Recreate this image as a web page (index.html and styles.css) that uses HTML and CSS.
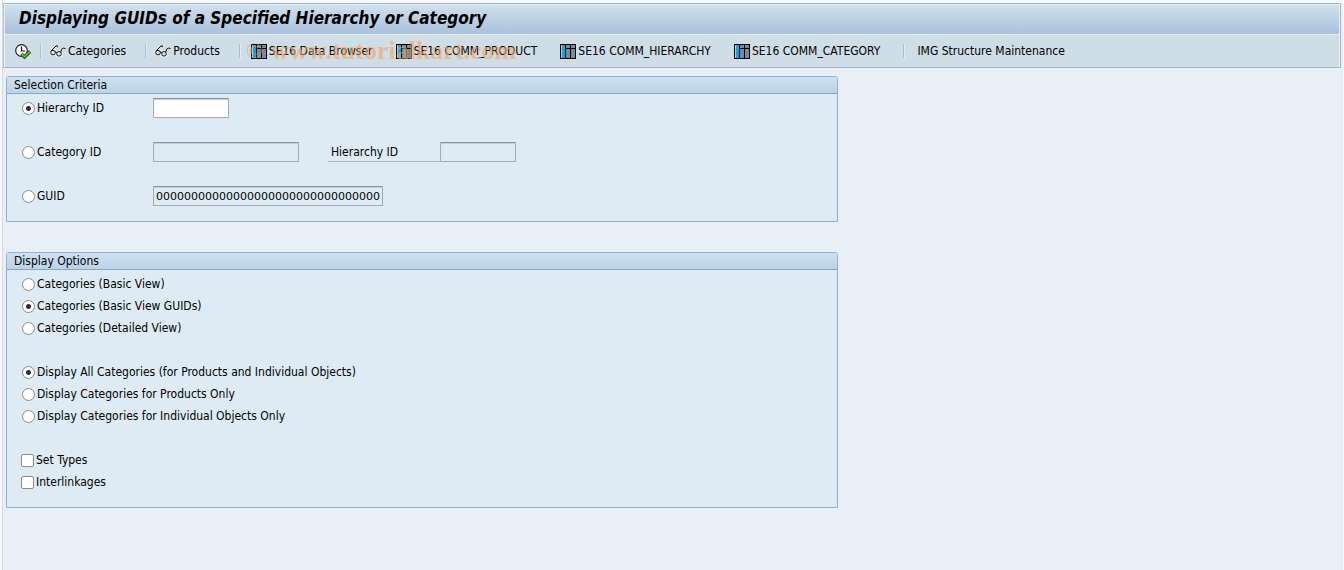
FILE: index.html
```html
<!DOCTYPE html>
<html lang="en">
<head>
    <meta charset="UTF-8">
    <meta name="viewport" content="width=device-width, initial-scale=1.0">
    <title>Displaying GUIDs of a Specified Hierarchy or Category</title>
    <link rel="stylesheet" href="styles.css">
</head>
<body>
    <!-- Shared toolbar icons -->
    <svg class="icon-defs" width="0" height="0" aria-hidden="true">
        <symbol id="icon-glasses" viewBox="0 0 16 14">
            <g fill="none" stroke="#fff" stroke-width="2.6" opacity="0.6">
                <circle cx="3.4" cy="8.4" r="2.3"/>
                <circle cx="9.2" cy="9.8" r="2.3"/>
            </g>
            <g fill="none" stroke="#111" stroke-width="1">
                <circle cx="3" cy="8.6" r="2.3"/>
                <circle cx="9" cy="9.8" r="2.3"/>
                <path d="M5.2 8.2 Q6.2 7.4 6.9 8.8"/>
                <path d="M1 7 L6 2 Q7.5 0.8 7.5 3.2"/>
                <path d="M10.8 8.2 L11.6 5.2 Q13 3.4 15.5 4.5"/>
            </g>
        </symbol>
        <symbol id="icon-table" viewBox="0 0 16 15">
            <rect x="0" y="0" width="16" height="15" fill="#000"/>
            <rect x="1" y="1" width="4" height="3" fill="#4a93b8"/>
            <rect x="1" y="4" width="4" height="10" fill="#0aa5ee"/>
            <rect x="1" y="4" width="1" height="10" fill="#7cdcff"/>
            <rect x="1" y="1" width="1" height="3" fill="#9fd4e8"/>
            <rect x="6" y="1" width="4" height="3" fill="#748c9c"/>
            <rect x="11" y="1" width="4" height="3" fill="#748c9c"/>
            <rect x="6" y="5" width="4" height="9" fill="#748c9c"/>
            <rect x="11" y="5" width="4" height="9" fill="#748c9c"/>
        </symbol>
    </svg>

    <div class="window">
        <header class="app-header">
            <h1 class="app-title">Displaying GUIDs of a Specified Hierarchy or Category</h1>
            <div class="toolbar">
                <button type="button" class="tool-btn" aria-label="Execute">
                    <svg class="icon" width="16" height="15" viewBox="0 0 16 15">
                        <circle cx="6.5" cy="6.5" r="5.8" fill="#fff" stroke="#222" stroke-width="1.2"/>
                        <path d="M6.5 2.5 V7 H10" fill="none" stroke="#111" stroke-width="1.2"/>
                        <path d="M6.5 10 L9.5 13 L15 7.5" fill="none" stroke="#1d4a12" stroke-width="3.4"/>
                        <path d="M6.8 10.2 L9.5 12.8 L14.8 7.6" fill="none" stroke="#5cc02e" stroke-width="1.8"/>
                    </svg>
                </button>
                <span class="separator"></span>
                <button type="button" class="tool-btn"><svg class="icon" width="16" height="14"><use href="#icon-glasses"/></svg>Categories</button>
                <span class="separator"></span>
                <button type="button" class="tool-btn"><svg class="icon" width="16" height="14"><use href="#icon-glasses"/></svg>Products</button>
                <span class="separator"></span>
                <div class="tool-group">
                    <button type="button" class="tool-btn"><svg class="icon" width="16" height="15"><use href="#icon-table"/></svg>SE16 Data Browser</button>
                    <button type="button" class="tool-btn"><svg class="icon" width="16" height="15"><use href="#icon-table"/></svg>SE16 COMM_PRODUCT</button>
                    <button type="button" class="tool-btn"><svg class="icon" width="16" height="15"><use href="#icon-table"/></svg>SE16 COMM_HIERARCHY</button>
                    <button type="button" class="tool-btn"><svg class="icon" width="16" height="15"><use href="#icon-table"/></svg>SE16 COMM_CATEGORY</button>
                </div>
                <span class="separator"></span>
                <button type="button" class="tool-btn text-only">IMG Structure Maintenance</button>
                <div class="watermark"><span class="mark">©</span>www.tutorialkart.com</div>
            </div>
        </header>

        <form class="content">
            <section class="panel">
                <h2 class="panel-title">Selection Criteria</h2>
                <div class="panel-body">
                    <div class="row">
                        <label class="option key"><input type="radio" name="criteria" checked>Hierarchy ID</label>
                        <input type="text" class="field short" aria-label="Hierarchy ID">
                    </div>
                    <div class="row spaced">
                        <label class="option key"><input type="radio" name="criteria">Category ID</label>
                        <input type="text" class="field medium" aria-label="Category ID" readonly>
                        <label class="field-label" for="categoryHierarchy">Hierarchy ID</label>
                        <input type="text" class="field short" id="categoryHierarchy" readonly>
                    </div>
                    <div class="row spaced">
                        <label class="option key"><input type="radio" name="criteria">GUID</label>
                        <input type="text" class="field long" aria-label="GUID" value="00000000000000000000000000000000" readonly>
                    </div>
                </div>
            </section>

            <section class="panel">
                <h2 class="panel-title">Display Options</h2>
                <div class="panel-body">
                    <div class="row"><label class="option"><input type="radio" name="view">Categories (Basic View)</label></div>
                    <div class="row"><label class="option"><input type="radio" name="view" checked>Categories (Basic View GUIDs)</label></div>
                    <div class="row"><label class="option"><input type="radio" name="view">Categories (Detailed View)</label></div>

                    <div class="row spaced"><label class="option"><input type="radio" name="scope" checked>Display All Categories (for Products and Individual Objects)</label></div>
                    <div class="row"><label class="option"><input type="radio" name="scope">Display Categories for Products Only</label></div>
                    <div class="row"><label class="option"><input type="radio" name="scope">Display Categories for Individual Objects Only</label></div>

                    <div class="row spaced"><label class="option"><input type="checkbox" name="setTypes">Set Types</label></div>
                    <div class="row"><label class="option"><input type="checkbox" name="interlinkages">Interlinkages</label></div>
                </div>
            </section>
        </form>
    </div>
</body>
</html>
```
FILE: styles.css
```css
:root {
    --page-bg: #e8eff7;
    --panel-bg: #deebf4;
    --toolbar-bg: #cfdde7;
    --border-blue: #8db2d3;
    --border-grey: #a3b5c6;
}

* {
    box-sizing: border-box;
}

body {
    margin: 0;
    background: #f6f9fc;
    color: #000;
    font-family: "DejaVu Sans Condensed", "DejaVu Sans", sans-serif;
    font-size: 12px;
    line-height: 16px;
}

.icon-defs {
    position: absolute;
}

.window {
    min-height: 100vh;
    padding: 3px 2px 0 0;
    margin: 0 1px 0 2px;
    border-left: 1px solid #d2dbe9;
    background: linear-gradient(#f6f9fc 3px, var(--page-bg) 3px);
}

/* Title and toolbar */
.app-header {
    border: 1px solid var(--border-grey);
    border-left-color: #b5c6d6;
}

.app-title {
    margin: 0;
    height: 30px;
    padding-left: 14px;
    border: 1px solid #e6eef5;
    border-bottom: 0;
    background: linear-gradient(#d0e0ec, #a9c1dc);
    font-size: 17px;
    font-weight: bold;
    font-style: italic;
    line-height: 26px;
}

.toolbar {
    position: relative;
    display: flex;
    align-items: center;
    height: 33px;
    padding-left: 10px;
    border: 1px solid #e9f1f7;
    border-bottom: 0;
    background: var(--toolbar-bg);
}

.tool-btn {
    display: flex;
    align-items: center;
    gap: 2px;
    padding: 0;
    border: 0;
    background: none;
    color: inherit;
    font: inherit;
    white-space: nowrap;
    cursor: pointer;
}

.tool-btn.text-only {
    padding-left: 4px;
}

.tool-group {
    display: flex;
    gap: 23px;
    margin: 0 7px 0 2px;
}

.separator {
    width: 2px;
    height: 14px;
    margin: 0 8px 0 19px;
    border-left: 1px solid #a2bfdc;
    border-right: 1px solid #e2ecf4;
}

.tool-group + .separator {
    margin-left: 16px;
}

.tool-btn:first-child + .separator {
    margin-left: 9px;
}

.watermark {
    position: absolute;
    left: 241px;
    top: 1px;
    display: flex;
    gap: 8px;
    color: #f4a460;
    opacity: 0.6;
    font-family: "Liberation Serif", serif;
    font-size: 26px;
    font-weight: bold;
    line-height: 30px;
    white-space: nowrap;
    pointer-events: none;
}

.watermark .mark {
    font-size: 22px;
    font-weight: normal;
}

/* Panels */
.content {
    display: flex;
    flex-direction: column;
    gap: 30px;
    padding: 8px 3px;
}

.panel {
    width: 100%;
    max-width: 832px;
    border: 1px solid var(--border-blue);
    border-radius: 3px 3px 0 0;
    background: var(--panel-bg);
}

.panel-title {
    margin: 0;
    padding-left: 7px;
    border-bottom: 1px solid #86a6cc;
    border-radius: 2px 2px 0 0;
    background: linear-gradient(#cfe0ef, #bcd3e9);
    font-size: 12px;
    font-weight: normal;
    line-height: 16px;
}

.panel-body {
    padding: 3px 14px 14px;
}

.row {
    display: flex;
    align-items: center;
    height: 22px;
}

.row.spaced {
    margin-top: 22px;
}

.option {
    display: flex;
    align-items: center;
    gap: 2px;
}

.option.key {
    width: 132px;
}

.option input {
    appearance: none;
    width: 13px;
    height: 13px;
    margin: 0 0 0 1px;
    border: 1px solid #8c8c8c;
    background: #fff;
}

.option input[type="radio"] {
    border-radius: 50%;
}

.option input[type="radio"]:checked {
    background: radial-gradient(circle, #2c2c44 2px, #fff 3px);
}

.option input[type="checkbox"] {
    margin-left: 0;
    border-radius: 2px;
}

.field {
    height: 20px;
    padding: 0 3px;
    border: 1px solid #a9abae;
    border-top-color: #8f9193;
    border-radius: 1px;
    background: #fff;
    box-shadow: inset 0 1px 1px #c8cdd2;
    color: #000;
    font-family: "DejaVu Sans", sans-serif;
    font-size: 11px;
    outline: none;
}

.field:read-only {
    background: var(--panel-bg);
}

.field.short {
    width: 76px;
}

.field.medium {
    width: 146px;
}

.field.long {
    width: 230px;
    padding: 0 2px;
}

.field-label {
    width: 112px;
    height: 20px;
    margin-left: 29px;
    padding-left: 3px;
    border-bottom: 1px solid #b0b8c0;
    line-height: 20px;
}
```
